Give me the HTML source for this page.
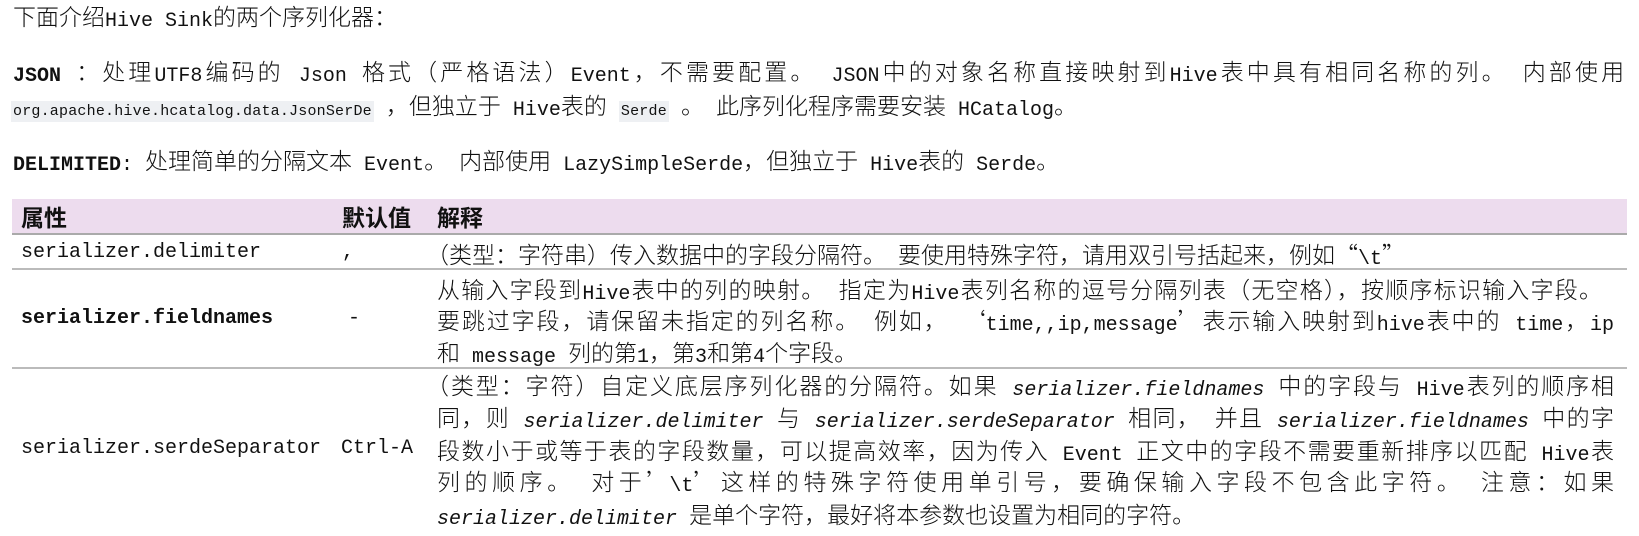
<!DOCTYPE html>
<html><head><meta charset="utf-8">
<style>
html,body{margin:0;padding:0;background:#fff;}
body{width:1639px;height:526px;position:relative;overflow:hidden;font-family:"Liberation Mono","Noto Sans CJK SC",monospace;font-size:20px;color:#111;}
.c{font-family:"Noto Sans CJK SC","Noto Serif CJK SC",sans-serif;font-size:23px;font-weight:300;vertical-align:1px;}
b .c,.h .c{font-weight:bold;}
.l{position:absolute;white-space:nowrap;height:32px;line-height:32px;}
.j{text-align:justify;text-align-last:justify;}
code{font-family:"Liberation Mono",monospace;font-size:15px;background:#eef0f3;padding:2px 2px;letter-spacing:0.2px;}
i{font-style:italic;}
.hd{position:absolute;left:12px;top:199px;width:1615px;height:34px;background:#eddcee;border-bottom:2px solid #aaa;}
.hr{position:absolute;left:12px;width:1615px;height:0;border-top:2px solid #bbb;}
</style></head><body>
<div class="l" style="left:13px;top:-1px;"><span class="c">下面介绍</span>Hive Sink<span class="c">的两个序列化器：</span></div>

<div class="l j" style="left:13px;top:54px;width:1611px;"><b>JSON</b> <span class="c">：处理</span>UTF8<span class="c">编码的</span> Json <span class="c">格式（严格语法）</span>Event<span class="c">，不需要配置。</span> JSON<span class="c">中的对象名称直接映射到</span>Hive<span class="c">表中具有相同名称的列。</span> <span class="c">内部使用</span></div>
<div class="l" style="left:11px;top:88px;"><code>org.apache.hive.hcatalog.data.JsonSerDe</code> <span class="c">，但独立于</span> Hive<span class="c">表的</span> <code>Serde</code> <span class="c">。</span> <span class="c">此序列化程序需要安装</span> HCatalog<span class="c">。</span></div>

<div class="l" style="left:13px;top:143px;"><b>DELIMITED</b>: <span class="c">处理简单的分隔文本</span> Event<span class="c">。</span> <span class="c">内部使用</span> LazySimpleSerde<span class="c">，但独立于</span> Hive<span class="c">表的</span> Serde<span class="c">。</span></div>

<div class="hd"></div>
<div class="l h" style="left:21px;top:200px;"><span class="c">属性</span></div>
<div class="l h" style="left:342px;top:200px;"><span class="c">默认值</span></div>
<div class="l h" style="left:437px;top:200px;"><span class="c">解释</span></div>

<div class="l" style="left:21px;top:237px;">serializer.delimiter</div>
<div class="l" style="left:342px;top:237px;">,</div>
<div class="l" style="left:426px;top:237px;"><span class="c">（类型：字符串）传入数据中的字段分隔符。</span> <span class="c">要使用特殊字符，请用双引号括起来，例如“</span>\t<span class="c">”</span></div>
<div class="hr" style="top:268px;"></div>

<div class="l" style="left:21px;top:303px;font-weight:bold;">serializer.fieldnames</div>
<div class="l" style="left:348px;top:303px;">-</div>
<div class="l j" style="left:437px;top:272px;width:1165px;"><span class="c">从输入字段到</span>Hive<span class="c">表中的列的映射。</span> <span class="c">指定为</span>Hive<span class="c">表列名称的逗号分隔列表（无空格），按顺序标识输入字段。</span></div>
<div class="l j" style="left:437px;top:303px;width:1177px;"><span class="c">要跳过字段，请保留未指定的列名称。</span> <span class="c">例如，</span> <span class="c">‘</span>time,,ip,message<span class="c">’表示输入映射到</span>hive<span class="c">表中的</span> time<span class="c">，</span>ip</div>
<div class="l" style="left:437px;top:335px;"><span class="c">和</span> message <span class="c">列的第</span>1<span class="c">，第</span>3<span class="c">和第</span>4<span class="c">个字段。</span></div>
<div class="hr" style="top:367px;"></div>

<div class="l" style="left:21px;top:433px;">serializer.serdeSeparator</div>
<div class="l" style="left:341px;top:433px;">Ctrl-A</div>
<div class="l j" style="left:426px;top:368px;width:1188px;"><span class="c">（类型：字符）自定义底层序列化器的分隔符。如果</span> <i>serializer.fieldnames</i> <span class="c">中的字段与</span> Hive<span class="c">表列的顺序相</span></div>
<div class="l j" style="left:437px;top:400px;width:1177px;"><span class="c">同，则</span> <i>serializer.delimiter</i> <span class="c">与</span> <i>serializer.serdeSeparator</i> <span class="c">相同，</span> <span class="c">并且</span> <i>serializer.fieldnames</i> <span class="c">中的字</span></div>
<div class="l j" style="left:437px;top:433px;width:1177px;"><span class="c">段数小于或等于表的字段数量，可以提高效率，因为传入</span> Event <span class="c">正文中的字段不需要重新排序以匹配</span> Hive<span class="c">表</span></div>
<div class="l j" style="left:437px;top:464px;width:1177px;"><span class="c">列的顺序。</span> <span class="c">对于’</span>\t<span class="c">’这样的特殊字符使用单引号，要确保输入字段不包含此字符。</span> <span class="c">注意：如果</span></div>
<div class="l" style="left:437px;top:497px;"><i>serializer.delimiter</i> <span class="c">是单个字符，最好将本参数也设置为相同的字符。</span></div>
</body></html>
